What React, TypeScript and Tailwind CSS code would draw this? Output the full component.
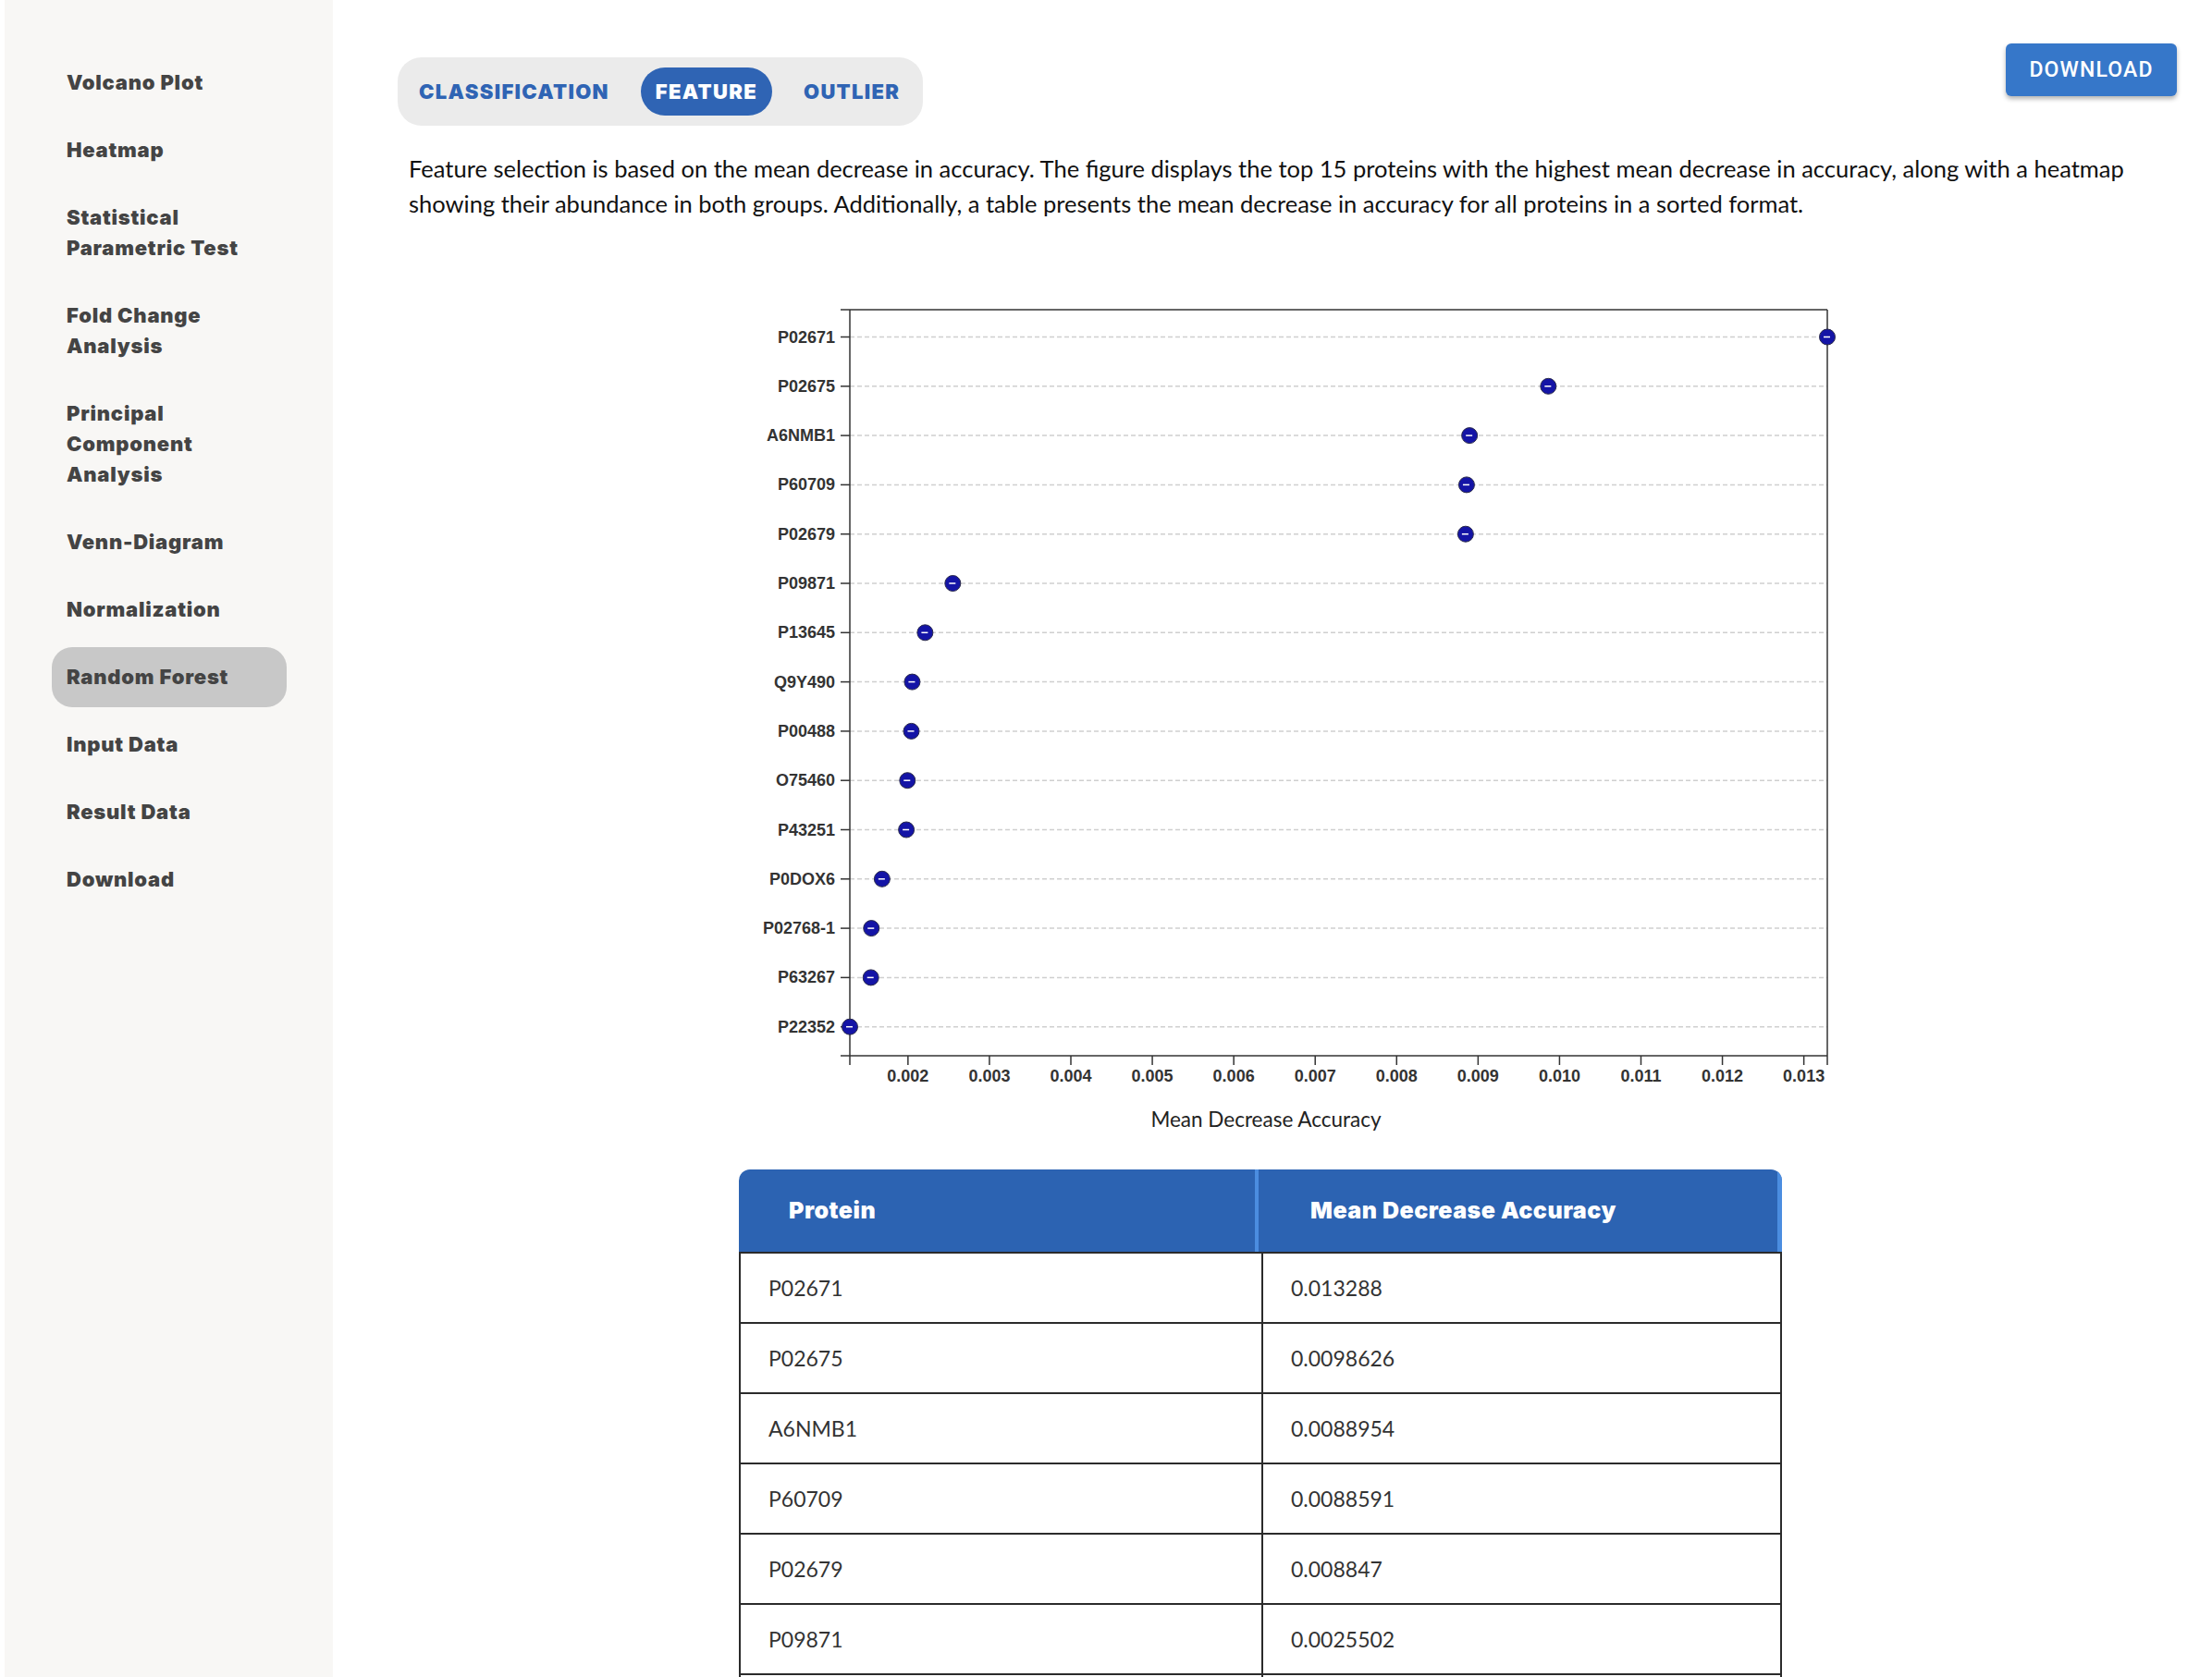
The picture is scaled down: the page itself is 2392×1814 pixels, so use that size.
import React from "react";

const navItems = [
  "Volcano Plot",
  "Heatmap",
  "Statistical Parametric Test",
  "Fold Change Analysis",
  "Principal Component Analysis",
  "Venn-Diagram",
  "Normalization",
  "Random Forest",
  "Input Data",
  "Result Data",
  "Download",
];

const data: [string, number, string][] = [
  ["P02671", 0.013288, "0.013288"],
  ["P02675", 0.0098626, "0.0098626"],
  ["A6NMB1", 0.0088954, "0.0088954"],
  ["P60709", 0.0088591, "0.0088591"],
  ["P02679", 0.008847, "0.008847"],
  ["P09871", 0.0025502, "0.0025502"],
  ["P13645", 0.0022103, "0.0022103"],
  ["Q9Y490", 0.0020518, "0.0020518"],
  ["P00488", 0.0020412, "0.0020412"],
  ["O75460", 0.0019935, "0.0019935"],
  ["P43251", 0.0019802, "0.0019802"],
  ["P0DOX6", 0.0016821, "0.0016821"],
  ["P02768-1", 0.0015503, "0.0015503"],
  ["P63267", 0.0015441, "0.0015441"],
  ["P22352", 0.0012862, "0.0012862"],
];

const L = 159;
const R = 1216;
const T = 34;
const B = 841;
const vmin = 0.0012862;
const vmax = 0.013288;
const sx = (v: number) => L + ((v - vmin) / (vmax - vmin)) * (R - L);
const sy = (i: number) => 63.5 + i * 53.3;

function Chart() {
  const ticks = [0.002, 0.003, 0.004, 0.005, 0.006, 0.007, 0.008, 0.009, 0.01, 0.011, 0.012, 0.013];
  return (
    <svg width={1240} height={940} className="block ml-[330px] mt-[62px]">
      {data.map((d, i) => (
        <line key={"g" + i} x1={L} x2={R} y1={sy(i)} y2={sy(i)} stroke="#cfcfcf" strokeWidth={1.5} strokeDasharray="5,3" />
      ))}
      <line x1={149} x2={R} y1={T} y2={T} stroke="#333" strokeWidth={1.5} />
      <line x1={R} x2={R} y1={T} y2={B + 10} stroke="#333" strokeWidth={1.5} />
      <line x1={L} x2={L} y1={T} y2={B + 10} stroke="#333" strokeWidth={1.5} />
      <line x1={149} x2={R} y1={B} y2={B} stroke="#333" strokeWidth={1.5} />
      {data.map((d, i) => (
        <g key={"y" + i}>
          <line x1={149} x2={L} y1={sy(i)} y2={sy(i)} stroke="#333" strokeWidth={1.5} />
          <text
            x={143}
            y={sy(i)}
            textAnchor="end"
            dominantBaseline="central"
            fontFamily="'Liberation Sans', Arial, sans-serif"
            fontWeight="bold"
            fontSize={18}
            fill="#333"
          >
            {d[0]}
          </text>
        </g>
      ))}
      {ticks.map((t) => (
        <g key={"x" + t}>
          <line x1={sx(t)} x2={sx(t)} y1={B} y2={B + 10} stroke="#333" strokeWidth={1.5} />
          <text
            x={sx(t)}
            y={B + 22}
            textAnchor="middle"
            dominantBaseline="central"
            fontFamily="'Liberation Sans', Arial, sans-serif"
            fontWeight="bold"
            fontSize={18}
            fill="#333"
          >
            {t.toFixed(3)}
          </text>
        </g>
      ))}
      {data.map((d, i) => (
        <g key={"p" + i}>
          <circle cx={sx(d[1])} cy={sy(i)} r={8.5} fill="#1414a6" stroke="#2a2a4a" strokeWidth={1} />
          <line x1={sx(d[1]) - 4} x2={sx(d[1]) + 3} y1={sy(i)} y2={sy(i)} stroke="#ffffff" strokeWidth={1.5} />
        </g>
      ))}
      <text
        x={609}
        y={909}
        textAnchor="middle"
        dominantBaseline="central"
        fontFamily="Lato, sans-serif"
        fontSize={22.5}
        fill="#222"
      >
        Mean Decrease Accuracy
      </text>
    </svg>
  );
}

export default function App() {
  return (
    <div className="flex w-[2392px] h-[1814px] overflow-hidden bg-white">
      <aside className="ml-[5px] w-[355px] shrink-0 bg-[#f8f7f5] pt-[57px] pl-[51px] font-['Inter',sans-serif]">
        {navItems.map((n) => (
          <div
            key={n}
            className={
              "w-[254px] rounded-[22px] px-4 py-4 mb-2 text-[22px] leading-[33px] font-black tracking-[0.035em] text-[#444] " +
              (n === "Random Forest" ? "bg-[#c8c8c8]" : "")
            }
          >
            {n}
          </div>
        ))}
      </aside>
      <main className="flex-1 pl-[70px] pr-[38px] pt-[47px]">
        <div className="flex justify-between items-start">
          <div className="mt-[15px] flex items-center gap-[18px] rounded-[26px] bg-[#ebebeb] pl-[7px] pr-[9px] py-[11px] font-['Inter',sans-serif]">
            <div className="px-4 h-[52px] flex items-center text-[22px] font-black tracking-[0.06em] text-[#2f64b4]">CLASSIFICATION</div>
            <div className="px-4 h-[52px] flex items-center rounded-full bg-[#2f64b4] text-[22px] font-black tracking-[0.06em] text-white">FEATURE</div>
            <div className="px-4 h-[52px] flex items-center text-[22px] font-black tracking-[0.06em] text-[#2f64b4]">OUTLIER</div>
          </div>
          <button className="w-[185px] h-[57px] rounded-[6px] bg-[#3677c9] text-white font-['Roboto',sans-serif] font-medium text-[23px] tracking-[0.05em] leading-none shadow-[0_3px_5px_rgba(0,0,0,0.3)]">
            DOWNLOAD
          </button>
        </div>
        <p className="mt-[27px] pl-[12px] font-['Lato',sans-serif] text-[25.5px] leading-[38px] text-[#111]">
          Feature selection is based on the mean decrease in accuracy. The figure displays the top 15 proteins with the highest mean decrease in accuracy, along with a heatmap showing their abundance in both groups. Additionally, a table presents the mean decrease in accuracy for all proteins in a sorted format.
        </p>
        <Chart />
        <div className="ml-[369px] mt-[24px] w-[1128px]">
          <div className="flex h-[89px] rounded-t-[12px] bg-[#2c63b2] overflow-hidden font-['Inter',sans-serif] text-white text-[25px] font-black tracking-[0.02em]">
            <div className="w-[558px] flex items-center pl-[54px]">Protein</div>
            <div className="w-[4px] bg-[#4b8de0]"></div>
            <div className="flex-1 flex items-center pl-[56px]">Mean Decrease Accuracy</div>
            <div className="w-[5px] bg-[#4b8de0]"></div>
          </div>
          <div className="border-t-2 border-[#2b2b2b] font-['Lato',sans-serif] text-[23px] text-[#333]">
            {data.map((d) => (
              <div key={d[0]} className="grid grid-cols-[565px_1fr] h-[76px] border-b-2 border-x-2 border-[#2b2b2b]">
                <div className="flex items-center pl-[30px] border-r-2 border-[#2b2b2b]">{d[0]}</div>
                <div className="flex items-center pl-[30px]">{d[2]}</div>
              </div>
            ))}
          </div>
        </div>
      </main>
    </div>
  );
}
